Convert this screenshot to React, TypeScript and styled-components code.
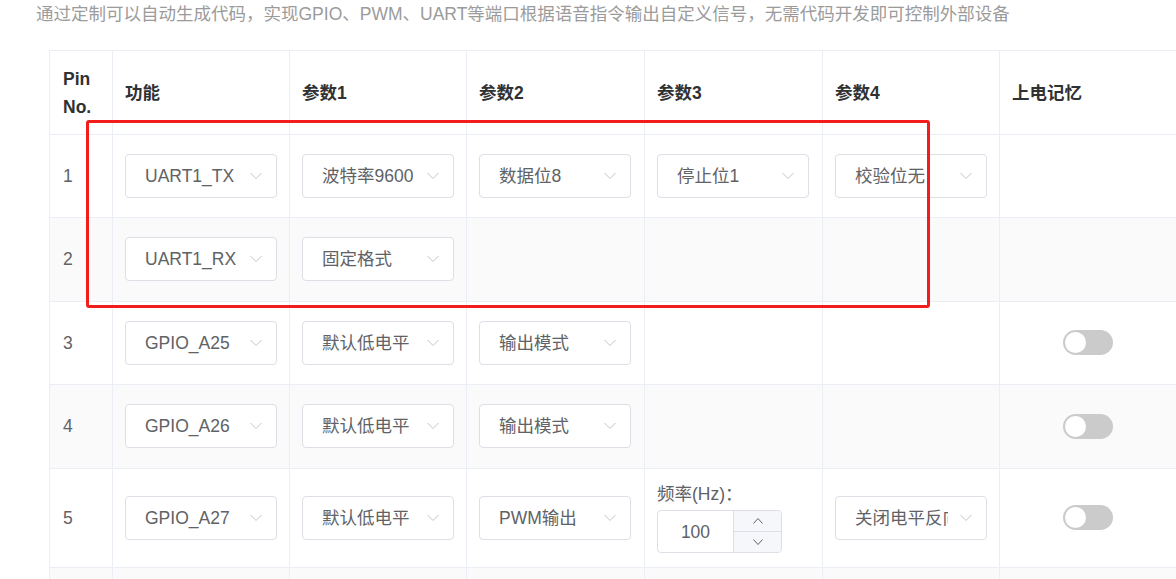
import React from 'react';
import styled, {createGlobalStyle} from 'styled-components';

const GlobalStyle = createGlobalStyle`
    html, body {
        margin: 0;
        padding: 0;
        background: #fff;
        overflow: hidden;
    }
    body {
        font-family: "Liberation Sans", "Noto Sans CJK SC", sans-serif;
        color: #606266;
    }
`;

const Page = styled.div`
    position: relative;
    width: 1176px;
    height: 579px;
    overflow: hidden;
    padding: 2px 0 0 36px;
    box-sizing: border-box;
`;

const Description = styled.div`
    font-size: 17.5px;
    line-height: 24px;
    color: #9b9b9b;
    white-space: nowrap;
`;

const Table = styled.table`
    margin: 24px 0 0 13px;
    border-collapse: collapse;
    table-layout: fixed;
    width: 1304px;
    font-size: 17.5px;
`;

const HeadCell = styled.th<{$first?: boolean}>`
    height: 83px;
    padding: 0 12px 0 ${p => (p.$first ? 13 : 12)}px;
    border: 1px solid #ebeef5;
    text-align: left;
    vertical-align: middle;
    font-weight: bold;
    color: #303133;
    line-height: 28px;
    background: #fff;
`;

const Row = styled.tr<{$striped: boolean; $height: number}>`
    height: ${p => p.$height}px;
    background: ${p => (p.$striped ? '#fafafa' : '#fff')};
`;

const Cell = styled.td<{$first?: boolean}>`
    padding: 0 12px 1px ${p => (p.$first ? 13 : 12)}px;
    border: 1px solid #ebeef5;
    vertical-align: middle;
    line-height: 24px;
    color: #606266;
`;

const CenterCell = styled(Cell)`
    text-align: center;
`;

const SelectBox = styled.div`
    position: relative;
    width: 152px;
    height: 44px;
    box-sizing: border-box;
    border: 1px solid #dcdfe6;
    border-radius: 4px;
    background: #fff;
    display: flex;
    align-items: center;
    padding: 0 38px 0 19px;
`;

const SelectText = styled.span`
    overflow: hidden;
    white-space: nowrap;
    color: #606266;
`;

const Arrow = styled.svg`
    position: absolute;
    right: 14px;
    top: 50%;
    margin-top: -4px;
`;

const Switch = styled.span`
    display: inline-flex;
    align-items: center;
    width: 50px;
    height: 25px;
    box-sizing: border-box;
    padding: 0 2px;
    border-radius: 13px;
    background: #cbcbcb;
    vertical-align: middle;
`;

const Knob = styled.span`
    width: 21px;
    height: 21px;
    border-radius: 50%;
    background: #fff;
`;

const FieldStack = styled.div`
    display: flex;
    flex-direction: column;
    gap: 4px;
`;

const FieldLabel = styled.span`
    line-height: 24px;
`;

const NumberInput = styled.div`
    display: flex;
    width: 125px;
    height: 43px;
    box-sizing: border-box;
    border: 1px solid #dcdfe6;
    border-radius: 4px;
    overflow: hidden;
`;

const NumberValue = styled.span`
    flex: 1;
    display: flex;
    align-items: center;
    justify-content: center;
    color: #606266;
`;

const Steppers = styled.div`
    width: 47px;
    display: flex;
    flex-direction: column;
    border-left: 1px solid #dcdfe6;
    background: #f5f7fa;
`;

const Step = styled.span<{$top?: boolean}>`
    flex: 1;
    display: flex;
    align-items: center;
    justify-content: center;
    border-bottom: ${p => (p.$top ? '1px solid #dcdfe6' : 'none')};
`;

const Highlight = styled.div`
    position: absolute;
    left: 86px;
    top: 120px;
    width: 844px;
    height: 188px;
    box-sizing: border-box;
    border: 3px solid #f21d1a;
    border-radius: 3px;
    pointer-events: none;
`;

function Chevron({up = false, color = '#c0c4cc', size = 12}: {up?: boolean; color?: string; size?: number}) {
    const h = size / 2;
    return (
        <svg width={size} height={h + 1} viewBox={`0 0 ${size} ${h + 1}`} fill='none'>
            <path
                d={up ? `M0.5 ${h + 0.5} L${size / 2} 0.5 L${size - 0.5} ${h + 0.5}` : `M0.5 0.5 L${size / 2} ${h + 0.5} L${size - 0.5} 0.5`}
                stroke={color}
                strokeWidth='1'
            />
        </svg>
    );
}

function Select({value}: {value: string}) {
    return (
        <SelectBox>
            <SelectText>{value}</SelectText>
            <Arrow width='12' height='8' viewBox='0 0 12 8' fill='none'>
                <path d='M0.5 1 L6 6.5 L11.5 1' stroke='#c0c4cc' strokeWidth='1'/>
            </Arrow>
        </SelectBox>
    );
}

function Toggle() {
    return (
        <Switch>
            <Knob/>
        </Switch>
    );
}

type Param = string | {label: string; value: number} | null;

interface PinRow {
    pin: number;
    func: string;
    params: Param[];
    memory: boolean;
    height: number;
}

const rows: PinRow[] = [
    {pin: 1, func: 'UART1_TX', params: ['波特率9600', '数据位8', '停止位1', '校验位无'], memory: false, height: 83},
    {pin: 2, func: 'UART1_RX', params: ['固定格式', null, null, null], memory: false, height: 84},
    {pin: 3, func: 'GPIO_A25', params: ['默认低电平', '输出模式', null, null], memory: true, height: 83},
    {pin: 4, func: 'GPIO_A26', params: ['默认低电平', '输出模式', null, null], memory: true, height: 84},
    {pin: 5, func: 'GPIO_A27', params: ['默认低电平', 'PWM输出', {label: '频率(Hz)：', value: 100}, '关闭电平反向'], memory: true, height: 99},
];

const widths = [63, 177, 177, 178, 178, 177, 177, 177];
const headers = ['Pin No.', '功能', '参数1', '参数2', '参数3', '参数4', '上电记忆', ''];

function renderParam(param: Param) {
    if (param === null) {
        return null;
    }
    if (typeof param === 'string') {
        return <Select value={param}/>;
    }
    return (
        <FieldStack>
            <FieldLabel>{param.label}</FieldLabel>
            <NumberInput>
                <NumberValue>{param.value}</NumberValue>
                <Steppers>
                    <Step $top={true}>
                        <Chevron up={true} color='#606266' size={10}/>
                    </Step>
                    <Step>
                        <Chevron color='#606266' size={10}/>
                    </Step>
                </Steppers>
            </NumberInput>
        </FieldStack>
    );
}

export default function App() {
    return (
        <>
            <GlobalStyle/>
            <Page>
                <Description>
                    通过定制可以自动生成代码，实现GPIO、PWM、UART等端口根据语音指令输出自定义信号，无需代码开发即可控制外部设备
                </Description>
                <Table>
                    <colgroup>
                        {widths.map((w, i) => (
                            <col key={i} style={{width: w}}/>
                        ))}
                    </colgroup>
                    <thead>
                        <tr>
                            {headers.map((h, i) => (
                                <HeadCell key={i} $first={i === 0}>{h}</HeadCell>
                            ))}
                        </tr>
                    </thead>
                    <tbody>
                        {rows.map((row, i) => (
                            <Row key={row.pin} $striped={i % 2 === 1} $height={row.height}>
                                <Cell $first={true}>{row.pin}</Cell>
                                <Cell>
                                    <Select value={row.func}/>
                                </Cell>
                                {row.params.map((p, j) => (
                                    <Cell key={j}>{renderParam(p)}</Cell>
                                ))}
                                <CenterCell>{row.memory && <Toggle/>}</CenterCell>
                                <Cell/>
                            </Row>
                        ))}
                        <Row $striped={true} $height={84}>
                            {widths.map((_, i) => (
                                <Cell key={i} $first={i === 0}/>
                            ))}
                        </Row>
                    </tbody>
                </Table>
                <Highlight/>
            </Page>
        </>
    );
}
